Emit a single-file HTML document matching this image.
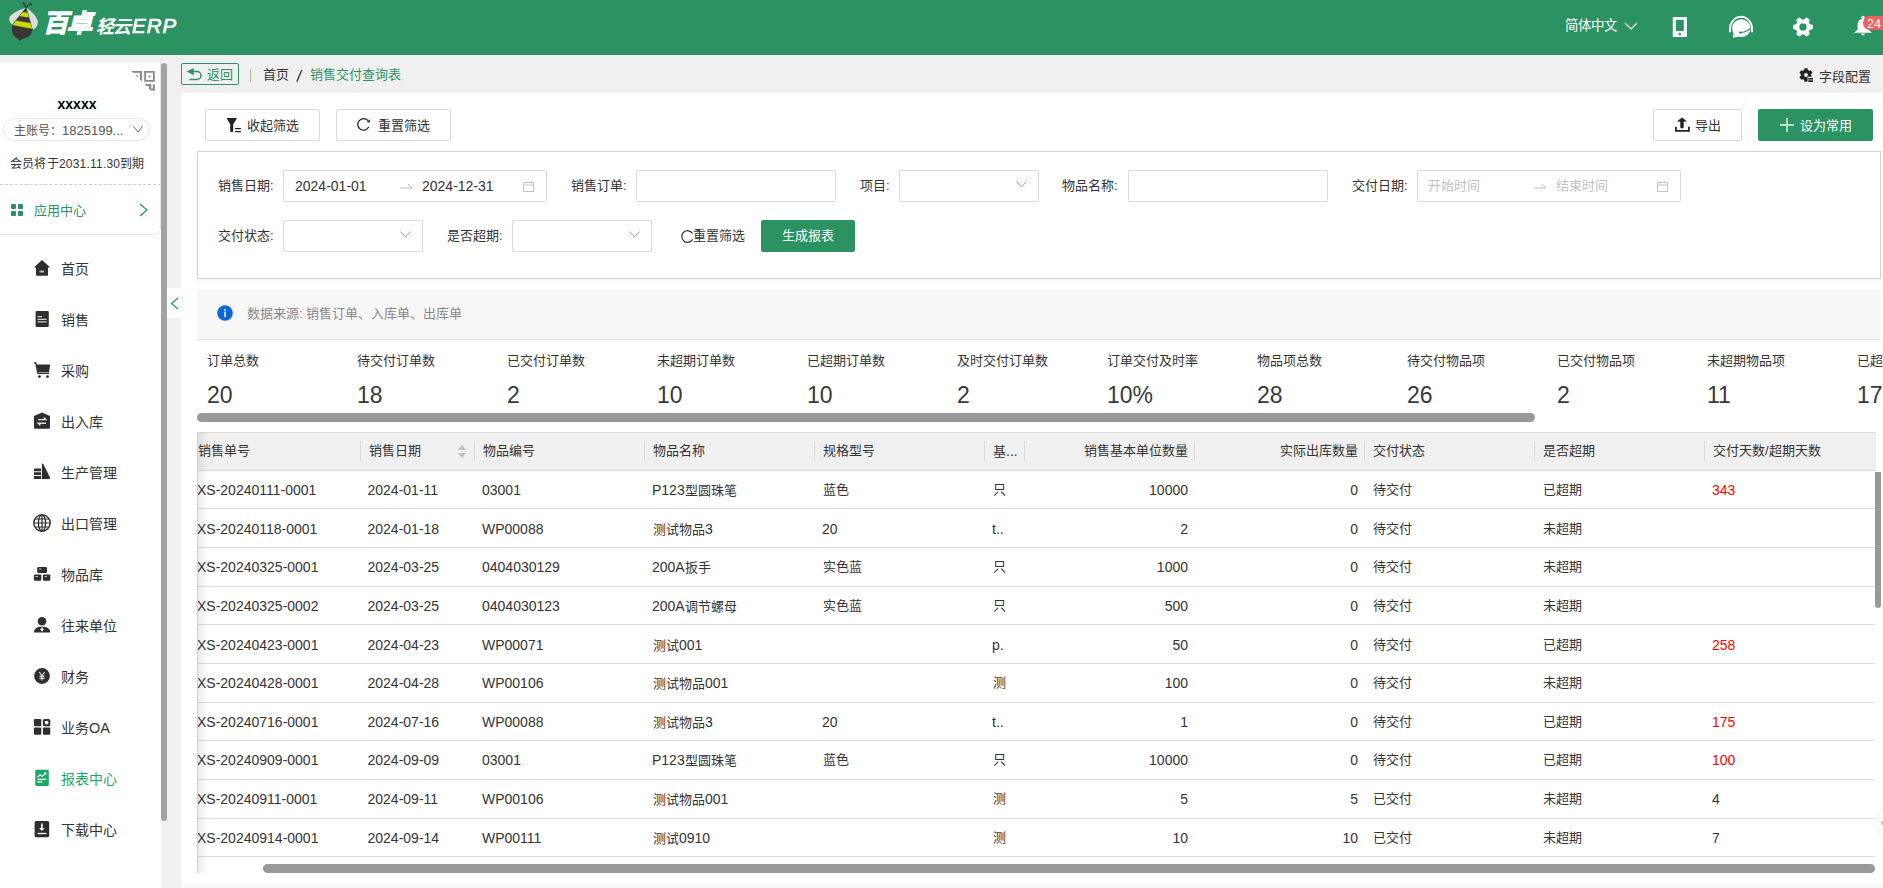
<!DOCTYPE html>
<html lang="zh-CN">
<head>
<meta charset="utf-8">
<style>
*{margin:0;padding:0;box-sizing:border-box}
html,body{width:1883px;height:888px;overflow:hidden;background:#f0f0f0;font-family:"Liberation Sans",sans-serif;color:#333;font-size:13px}
.a{position:absolute;white-space:nowrap}
#hdr{position:absolute;left:0;top:0;width:1883px;height:55px;background:#2b9362}
#side{position:absolute;left:0;top:63px;width:161px;height:825px;background:#fff}
#sbar{position:absolute;left:161px;top:63px;width:6px;height:758px;background:#a3a3a3;border-radius:3px}
#main{position:absolute;left:181px;top:93px;width:1702px;height:795px;background:#fff}
.menu{position:absolute;left:0;width:161px;height:20px}
.menu .ic{position:absolute;left:34px;top:2px;width:16px;height:16px}
.menu .t{position:absolute;left:61px;top:0;font-size:14px;line-height:20px;color:#333}

.btn{position:absolute;height:32px;border:1px solid #d9d9d9;background:#fff;border-radius:2px}
.inp{position:absolute;height:32px;border:1px solid #d9d9d9;background:#fff;border-radius:2px}
.n{font-size:1.077em}
.lbl{position:absolute;font-size:13px;line-height:18px;color:#333;white-space:nowrap}
</style>
</head>
<body>
<div id="hdr">
  <!-- bee logo -->
  <svg class="a" style="left:0;top:0" width="42" height="45" viewBox="0 0 42 45">
    <defs><clipPath id="bc"><path d="M26 7.8 L32.4 29.3 Q32 36.5 24.5 38.3 Q21.5 38.8 19.5 41 Q18 38.5 15.5 37.2 Q11.3 34.5 12 26 Z"/></clipPath></defs>
    <path d="M25.3 8 Q14 11.5 9.8 16.5 Q8 21.5 12.2 24.6 Z" fill="#dcdcdc"/>
    <path d="M26.8 8 Q35.5 14 37.7 20.5 Q38.5 27.5 32.8 29.4 Z" fill="#dcdcdc"/>
    <path d="M26 7.8 L32.4 29.3 Q32 36.5 24.5 38.3 Q21.5 38.8 19.5 41 Q18 38.5 15.5 37.2 Q11.3 34.5 12 26 Z" fill="#3c3536"/>
    <g clip-path="url(#bc)"><path d="M10 11.5 L40 13 L40 19 L10 14.8 Z" fill="#c8d800"/><path d="M5 18.8 L40 24.8 L40 30.5 L5 23.6 Z" fill="#c8d800"/></g>
    <path d="M26 7.8 Q25.5 5 23.5 3.2 M26.3 7.8 Q27.5 5 30.8 4.2" stroke="#3c3536" stroke-width="1.3" fill="none"/>
    <circle cx="23.6" cy="3.2" r="1.1" fill="#3c3536"/><circle cx="30.8" cy="4.2" r="1.1" fill="#3c3536"/>
  </svg>
  <div class="a" style="left:43px;top:6px;font-size:25px;font-weight:bold;font-style:italic;color:#fff;line-height:34px;letter-spacing:-1.5px;-webkit-text-stroke:1.2px #fff">百卓</div>
  <div class="a" style="left:96px;top:15px;font-size:18px;font-weight:bold;font-style:italic;color:#fff;line-height:24px;letter-spacing:-1px">轻云</div>
  <div class="a" style="left:132px;top:13px;font-size:20.5px;font-style:italic;color:#fff;line-height:26px;letter-spacing:1px;-webkit-text-stroke:0.7px #fff">ERP</div>

  <div class="a" style="left:1565px;top:17px;font-size:13.5px;color:#fff;line-height:18px">简体中文</div>
  <svg class="a" style="left:1624px;top:21px" width="14" height="10" viewBox="0 0 14 10"><path d="M1 2 L7 8 L13 2" stroke="#fff" stroke-width="1.1" fill="none"/></svg>

  <svg class="a" style="left:1672px;top:16px" width="16" height="22" viewBox="0 0 16 22"><path fill-rule="evenodd" d="M1.4 0.9 H14.3 Q14.9 0.9 14.9 1.5 V20.4 Q14.9 21 14.3 21 H1.4 Q0.8 21 0.8 20.4 V1.5 Q0.8 0.9 1.4 0.9 Z M4.3 4.1 Q3.9 4.1 3.9 4.5 V14.5 Q3.9 14.9 4.3 14.9 H11.4 Q11.8 14.9 11.8 14.5 V4.5 Q11.8 4.1 11.4 4.1 Z" fill="#fff"/><circle cx="7.8" cy="18.1" r="1.3" fill="#2b9362"/></svg>
  <svg class="a" style="left:1728px;top:15px" width="26" height="24" viewBox="0 0 26 24"><path d="M2 17.2 V13.8 A11 12 0 0 1 24 13.8 V17.2" stroke="#fff" stroke-width="2" fill="none"/><ellipse cx="13.3" cy="13.2" rx="9.2" ry="8.9" fill="#fff"/><path d="M5.6 17 L5 23 L10.5 21.4 Z" fill="#fff"/><path d="M12 17.6 Q18 17.6 22.3 13.4" stroke="#2b9362" stroke-width="1.3" fill="none"/><ellipse cx="12.4" cy="17.6" rx="1.7" ry="1.1" fill="#2b9362"/></svg>
  <svg class="a" style="left:1792px;top:16px" width="22" height="22" viewBox="0 0 22 22"><path fill-rule="evenodd" d="M12.06 4.08 L14.26 1.97 L17.19 3.66 L16.46 6.62 L17.52 8.46 L20.45 9.31 L20.45 12.69 L17.52 13.54 L16.46 15.38 L17.19 18.34 L14.26 20.03 L12.06 17.92 L9.94 17.92 L7.74 20.03 L4.81 18.34 L5.54 15.38 L4.48 13.54 L1.55 12.69 L1.55 9.31 L4.48 8.46 L5.54 6.62 L4.81 3.66 L7.74 1.97 L9.94 4.08 Z M11 6.9 A4.1 4.1 0 1 0 11 15.1 A4.1 4.1 0 1 0 11 6.9 Z" fill="#fff" stroke="#fff" stroke-width="1" stroke-linejoin="round"/></svg>
  <svg class="a" style="left:1853px;top:15px" width="20" height="22" viewBox="0 0 20 22"><circle cx="10" cy="2.4" r="1.7" fill="#fff"/><path d="M10 3.6 Q15.4 4.2 15.4 10.5 V14.8 L19 17.8 H1 L4.6 14.8 V10.5 Q4.6 4.2 10 3.6 Z" fill="#fff"/><path d="M7.6 18.6 Q10 22.2 12.4 18.6 Z" fill="#fff"/></svg>
  <div class="a" style="left:1863px;top:16px;width:27px;height:14px;background:#f45e5e;border-radius:7px"></div>
  <div class="a" style="left:1867px;top:17px;font-size:12.5px;line-height:14px;color:#fff">24</div>
</div>

<div id="side">
  <svg class="a" style="left:126px;top:3px" width="34" height="32" viewBox="0 0 34 32">
    <defs><clipPath id="qc"><polygon points="4.2,4 34,4 34,34 33.5,33.2"/></clipPath></defs>
    <g clip-path="url(#qc)" fill="#8a8a8a">
      <rect x="5" y="5" width="10.9" height="1.8"/><rect x="13.9" y="5" width="2" height="10.7"/><circle cx="10.4" cy="10.4" r="1.3"/>
      <path fill-rule="evenodd" d="M18.2 5 H28.8 V15.7 H18.2 Z M20 6.8 V13.9 H27 V6.8 Z"/><circle cx="23.5" cy="10.5" r="1.1"/>
      <rect x="26.8" y="18.2" width="2" height="6.3"/><rect x="23" y="22.6" width="5.8" height="1.9"/><rect x="18.2" y="18.2" width="7" height="2"/><rect x="23" y="18.2" width="2.2" height="6.3"/>
      <circle cx="28" cy="28.5" r="1"/>
    </g>
  </svg>
  <div class="a" style="left:0;width:154px;text-align:center;top:33px;font-size:14px;font-weight:bold;color:#000;line-height:16px">xxxxx</div>
  <div class="a" style="left:3px;top:55px;width:147px;height:23px;border:1px solid #e6e6e6;border-radius:12px"></div>
  <div class="a" style="left:14px;top:59px;font-size:12px;color:#555;line-height:17px">主账号：<span style="font-size:13px">1825199...</span></div>
  <svg class="a" style="left:133px;top:63px" width="10" height="7" viewBox="0 0 10 7"><path d="M0.5 0.5 L5 6 L9.5 0.5" stroke="#666" stroke-width="1" fill="none"/></svg>
  <div class="a" style="left:10px;top:93px;font-size:12px;color:#333;line-height:17px;letter-spacing:0.22px">会员将于2031.11.30到期</div>
  <div class="a" style="left:0;top:121px;width:161px;border-top:1px dashed #ccc"></div>
  <div class="a" style="left:-2px;top:-5px;width:163px;height:177px;border-right:1px solid #e6e6e6;border-bottom:1px solid #e6e6e6;border-bottom-right-radius:7px"></div>
  <svg class="a" style="left:11px;top:141px" width="12" height="12" viewBox="0 0 12 12"><rect x="0" y="0" width="5" height="5" rx="1" fill="#2b9362"/><rect x="7" y="0" width="5" height="5" rx="1" fill="#2b9362"/><rect x="0" y="7" width="5" height="5" rx="1" fill="#2b9362"/><rect x="7" y="7" width="5" height="5" rx="1" fill="#2b9362"/></svg>
  <div class="a" style="left:34px;top:139px;font-size:13px;color:#2b9362;line-height:17px">应用中心</div>
  <svg class="a" style="left:139px;top:140px" width="9" height="14" viewBox="0 0 9 14"><path d="M1 1 L8 7 L1 13" stroke="#2b9362" stroke-width="1.4" fill="none"/></svg>
  <svg class="a" style="left:33px;top:196px" width="18" height="18" viewBox="0 0 18 18"><path d="M9 1 L17.3 8.6 H15 V15.8 Q15 16.8 14 16.8 H4 Q3 16.8 3 15.8 V8.6 H0.8 Z" fill="#2e2e2e"/><rect x="6.5" y="11.6" width="4.5" height="1.9" fill="#bbb"/></svg><div class="a" style="left:61px;top:195.8px;font-size:14px;line-height:20px;color:#333">首页</div>
  <svg class="a" style="left:33px;top:247px" width="18" height="18" viewBox="0 0 18 18"><rect x="2.6" y="0.9" width="13.2" height="16.1" rx="1.2" fill="#2e2e2e"/><path d="M4.6 6.6 H9 M4.6 9.3 H13.6 M4.6 11.9 H13.6" stroke="#d0d0d0" stroke-width="1.3"/></svg><div class="a" style="left:61px;top:246.8px;font-size:14px;line-height:20px;color:#333">销售</div>
  <svg class="a" style="left:33px;top:298px" width="18" height="18" viewBox="0 0 18 18"><path d="M1 1.8 H2.8 L4.8 12.4 H16" stroke="#2e2e2e" stroke-width="1.3" fill="none"/><path d="M3.4 3.6 H17.2 L16 11.3 H4.9 Z" fill="#2e2e2e"/><circle cx="6.5" cy="15.6" r="1.4" fill="#2e2e2e"/><circle cx="14.5" cy="15.6" r="1.4" fill="#2e2e2e"/></svg><div class="a" style="left:61px;top:297.8px;font-size:14px;line-height:20px;color:#333">采购</div>
  <svg class="a" style="left:33px;top:349px" width="18" height="18" viewBox="0 0 18 18"><path d="M9 0.6 L17 4 V15.7 Q17 16.7 16 16.7 H2 Q1 16.7 1 15.7 V4 Z" fill="#2e2e2e"/><path d="M5 7.6 H12.8 L10.6 5.6 M13 11.2 H5.2 L7.4 13.2" stroke="rgba(255,255,255,0.85)" stroke-width="1.4" fill="none"/></svg><div class="a" style="left:61px;top:348.8px;font-size:14px;line-height:20px;color:#333">出入库</div>
  <svg class="a" style="left:33px;top:400px" width="18" height="18" viewBox="0 0 18 18"><path d="M9.6 0.6 Q10.2 0.6 10.6 1.4 L17 14.6 Q17.4 16 16 16 H8.9 V1.6 Q9 0.6 9.6 0.6 Z" fill="#2e2e2e"/><path d="M1.8 5.5 H8 V8.3 H0.9 V6.4 Q0.9 5.5 1.8 5.5 Z M0.9 9.3 H8 V12.1 H0.9 Z M0.9 13.1 H8 V16 H1.8 Q0.9 16 0.9 15.1 Z" fill="#2e2e2e"/></svg><div class="a" style="left:61px;top:399.8px;font-size:14px;line-height:20px;color:#333">生产管理</div>
  <svg class="a" style="left:33px;top:451px" width="18" height="18" viewBox="0 0 18 18"><circle cx="9" cy="9" r="8.2" stroke="#2e2e2e" stroke-width="1.4" fill="none"/><ellipse cx="9" cy="9" rx="3.6" ry="8.2" stroke="#2e2e2e" stroke-width="1.3" fill="none"/><path d="M1 9 H17 M2 5 H16 M2 13 H16 M9 1 V17" stroke="#2e2e2e" stroke-width="1.2"/></svg><div class="a" style="left:61px;top:450.8px;font-size:14px;line-height:20px;color:#333">出口管理</div>
  <svg class="a" style="left:33px;top:502px" width="18" height="18" viewBox="0 0 18 18"><rect x="4.2" y="2" width="9.8" height="6" rx="1.2" fill="#2e2e2e"/><rect x="0.9" y="9.4" width="7.4" height="6.4" rx="1.2" fill="#2e2e2e"/><rect x="9.9" y="9.4" width="7.4" height="6.4" rx="1.2" fill="#2e2e2e"/><path d="M6 4 H8.2 M2.6 11.5 H4.8 M11.6 11.5 H13.8" stroke="#ccc" stroke-width="1"/></svg><div class="a" style="left:61px;top:501.8px;font-size:14px;line-height:20px;color:#333">物品库</div>
  <svg class="a" style="left:33px;top:553px" width="18" height="18" viewBox="0 0 18 18"><circle cx="9" cy="5.3" r="4.3" fill="#2e2e2e"/><path d="M0.9 16.5 Q0.9 10.6 9 10.4 Q17.3 10.6 17.3 16.5 Z" fill="#2e2e2e"/><path d="M9 10.6 V14 M7.6 13 L9 15.2 L10.4 13 Z" stroke="rgba(255,255,255,0.85)" stroke-width="1" fill="rgba(255,255,255,0.85)"/></svg><div class="a" style="left:61px;top:552.8px;font-size:14px;line-height:20px;color:#333">往来单位</div>
  <svg class="a" style="left:33px;top:604px" width="18" height="18" viewBox="0 0 18 18"><circle cx="9" cy="9" r="7.9" fill="#2e2e2e"/><path d="M6.3 5 L9 8.8 L11.7 5 M9 8.8 V13.4 M6.5 9.4 H11.5 M6.5 11.4 H11.5" stroke="rgba(255,255,255,0.85)" stroke-width="1.1" fill="none"/></svg><div class="a" style="left:61px;top:603.8px;font-size:14px;line-height:20px;color:#333">财务</div>
  <svg class="a" style="left:33px;top:655px" width="18" height="18" viewBox="0 0 18 18"><rect x="0.9" y="1" width="7.4" height="7.3" rx="1.2" fill="#2e2e2e"/><rect x="10.9" y="2" width="5.4" height="5.3" rx="0.6" stroke="#2e2e2e" stroke-width="2" fill="none"/><rect x="0.9" y="9.4" width="7.4" height="7.3" rx="1.2" fill="#2e2e2e"/><rect x="9.9" y="9.4" width="7.4" height="7.3" rx="1.2" fill="#2e2e2e"/></svg><div class="a" style="left:61px;top:654.8px;font-size:14px;line-height:20px;color:#333">业务<span style="font-size:14.5px">OA</span></div>
  <svg class="a" style="left:33px;top:706px" width="18" height="18" viewBox="0 0 18 18"><rect x="2.3" y="0.8" width="13.5" height="16.2" rx="1.2" fill="#1aa862"/><path d="M4.5 8.2 L7.2 5.8 L9.2 7.2 L12.6 4" stroke="#fff" stroke-width="1.3" fill="none"/><path d="M10.6 3.4 H13.4 V6.2 Z" fill="#fff"/><path d="M4.5 10.4 H13.4 M4.5 12.9 H9.4" stroke="#fff" stroke-width="1.3"/></svg><div class="a" style="left:61px;top:705.8px;font-size:14px;line-height:20px;color:#1aa862">报表中心</div>
  <svg class="a" style="left:33px;top:757px" width="18" height="18" viewBox="0 0 18 18"><rect x="1.6" y="1" width="14.6" height="16.2" rx="1.6" fill="#2e2e2e"/><path d="M8.9 3.6 V9.6" stroke="#fff" stroke-width="1.6"/><path d="M6.1 8 L8.9 11 L11.7 8 Z" fill="#fff"/><path d="M4.6 13.5 H13.4" stroke="#fff" stroke-width="1.3"/></svg><div class="a" style="left:61px;top:756.8px;font-size:14px;line-height:20px;color:#333">下载中心</div>
</div>
<div id="sbar"></div>
<div id="main"></div>
<div class="a" style="left:167px;top:288px;width:14px;height:30px;background:#fff"></div>
<svg class="a" style="left:170px;top:297px" width="9" height="13" viewBox="0 0 9 13"><path d="M8 1 L1.5 6.5 L8 12" stroke="#2b9362" stroke-width="1.2" fill="none"/></svg>


<!-- breadcrumb bar -->
<div class="a" style="left:181px;top:63px;width:58px;height:22px;border:1px solid #2b9362;border-radius:2px"></div>
<svg class="a" style="left:186px;top:67px" width="16" height="14" viewBox="0 0 16 14"><path d="M6.5 4.6 H11 A3.95 3.95 0 0 1 11 12.5 H3.4" stroke="#2b9362" stroke-width="1.5" fill="none"/><path d="M0.6 4.6 L7.6 0.9 V8.3 Z" fill="#2b9362"/></svg>
<div class="a" style="left:207px;top:66px;font-size:13px;color:#2b9362;line-height:17px">返回</div>
<div class="a" style="left:250px;top:69px;width:1px;height:13px;background:#c9b68f"></div>
<div class="a" style="left:263px;top:66px;font-size:13px;color:#333;line-height:17px">首页</div>
<svg class="a" style="left:295px;top:69px" width="9" height="14" viewBox="0 0 9 14"><path d="M6.8 1 L1.8 12.8" stroke="#333" stroke-width="1.3"/></svg>
<div class="a" style="left:310px;top:66px;font-size:13px;color:#2b9362;line-height:17px">销售交付查询表</div>
<svg class="a" style="left:1798px;top:67px" width="16" height="16" viewBox="0 0 16 16"><defs><clipPath id="gc"><path d="M0 0 H16 V9.8 H9.6 V16 H0 Z"/></clipPath></defs><g clip-path="url(#gc)"><path fill-rule="evenodd" d="M6.15 3.36 L6.71 1.53 L9.29 1.53 L9.85 3.36 L11.09 4.07 L12.96 3.65 L14.25 5.88 L12.95 7.28 L12.95 8.72 L14.25 10.12 L12.96 12.35 L11.09 11.93 L9.85 12.64 L9.29 14.47 L6.71 14.47 L6.15 12.64 L4.91 11.93 L3.04 12.35 L1.75 10.12 L3.05 8.72 L3.05 7.28 L1.75 5.88 L3.04 3.65 L4.91 4.07 Z M8 5.8 A2.2 2.2 0 1 0 8 10.2 A2.2 2.2 0 1 0 8 5.8 Z" fill="#222" stroke="#222" stroke-width="0.5" stroke-linejoin="round"/></g><rect x="10.2" y="11" width="4.8" height="1.6" fill="#222"/><rect x="10.2" y="13.3" width="4.8" height="1.7" fill="#222"/></svg>
<div class="a" style="left:1819px;top:68px;font-size:13px;color:#333;line-height:17px">字段配置</div>

<!-- top buttons -->
<div class="btn" style="left:205px;top:109px;width:115px"></div>
<svg class="a" style="left:226px;top:117px" width="16" height="16" viewBox="0 0 16 16"><path d="M1.4 1 H10.4 Q11 1 10.7 1.8 L7.2 7.2 V14.2 Q5.7 16 4.2 14.2 V7.2 L0.9 1.8 Q0.7 1 1.4 1 Z" fill="#222"/><rect x="9" y="11" width="6" height="1.3" rx="0.6" fill="#222"/><rect x="9" y="14" width="6" height="1.3" rx="0.6" fill="#222"/></svg>
<div class="lbl" style="left:247px;top:117px">收起筛选</div>
<div class="btn" style="left:336px;top:109px;width:115px"></div>
<svg class="a" style="left:357px;top:118px" width="14" height="14" viewBox="0 0 14 14"><path d="M11.04 2.67 A5.8 5.8 0 1 0 11.86 8.85" stroke="#222" stroke-width="1.25" fill="none"/><path d="M12.9 1.2 L12.9 4.6 L9.5 4.3 Z" fill="#222"/></svg>
<div class="lbl" style="left:378px;top:117px">重置筛选</div>

<div class="btn" style="left:1653px;top:109px;width:89px"></div>
<svg class="a" style="left:1675px;top:116px" width="15" height="17" viewBox="0 0 15 17"><path d="M2.6 5.2 L7 1.8 L11.4 5.2 Z" fill="#222" stroke="#222" stroke-width="0.6" stroke-linejoin="round"/><path d="M5.3 4.5 H8.7 V11.6 Q7 13.4 5.3 11.6 Z" fill="#222"/><path d="M0.9 10.8 V14.9 H13.9 V10.8" stroke="#222" stroke-width="1.8" fill="none"/></svg>
<div class="lbl" style="left:1695px;top:117px">导出</div>
<div class="a" style="left:1758px;top:109px;width:115px;height:32px;background:#2b9362;border-radius:2px"></div>
<svg class="a" style="left:1780px;top:118px" width="15" height="15" viewBox="0 0 15 15"><path d="M7 0 V14 M0 7 H14" stroke="rgba(255,255,255,0.7)" stroke-width="1.8"/></svg>
<div class="lbl" style="left:1800px;top:117px;color:#fff">设为常用</div>

<!-- filter box -->
<div class="a" style="left:197px;top:151px;width:1684px;height:128px;border:1px solid #d3d3d3;background:#fff;box-shadow:0 3px 8px rgba(0,0,0,0.035)"></div>
<div class="lbl" style="left:218px;top:177px">销售日期:</div>
<div class="inp" style="left:283px;top:170px;width:264px"></div>
<div class="lbl" style="left:295px;top:177px"><span class="n">2024-01-01</span></div>
<svg class="a" style="left:400px;top:183px" width="13" height="6" viewBox="0 0 13 6"><path d="M0 5 H12 L8 1" stroke="#bbb" stroke-width="1" fill="none"/></svg>
<div class="lbl" style="left:422px;top:177px"><span class="n">2024-12-31</span></div>
<svg class="a" style="left:522px;top:180px" width="13" height="13" viewBox="0 0 13 13"><rect x="1.5" y="2.5" width="10" height="9" stroke="#c4c4c4" stroke-width="1" fill="none"/><path d="M1.5 5 H11.5 M4 1 V3 M9 1 V3" stroke="#c4c4c4" stroke-width="1"/></svg>

<div class="lbl" style="left:571px;top:177px">销售订单:</div>
<div class="inp" style="left:636px;top:170px;width:200px"></div>
<div class="lbl" style="left:860px;top:177px">项目:</div>
<div class="inp" style="left:899px;top:170px;width:140px"></div>
<svg class="a" style="left:1016px;top:181px" width="11" height="7" viewBox="0 0 11 7"><path d="M0.5 0.5 L5.5 6 L10.5 0.5" stroke="#999" stroke-width="1" fill="none"/></svg>
<div class="lbl" style="left:1062px;top:177px">物品名称:</div>
<div class="inp" style="left:1128px;top:170px;width:200px"></div>
<div class="lbl" style="left:1352px;top:177px">交付日期:</div>
<div class="inp" style="left:1417px;top:170px;width:264px"></div>
<div class="lbl" style="left:1428px;top:177px;color:#bfbfbf">开始时间</div>
<svg class="a" style="left:1534px;top:183px" width="13" height="6" viewBox="0 0 13 6"><path d="M0 5 H12 L8 1" stroke="#bbb" stroke-width="1" fill="none"/></svg>
<div class="lbl" style="left:1556px;top:177px;color:#bfbfbf">结束时间</div>
<svg class="a" style="left:1656px;top:180px" width="13" height="13" viewBox="0 0 13 13"><rect x="1.5" y="2.5" width="10" height="9" stroke="#c4c4c4" stroke-width="1" fill="none"/><path d="M1.5 5 H11.5 M4 1 V3 M9 1 V3" stroke="#c4c4c4" stroke-width="1"/></svg>

<div class="lbl" style="left:218px;top:227px">交付状态:</div>
<div class="inp" style="left:283px;top:220px;width:140px"></div>
<svg class="a" style="left:400px;top:231px" width="11" height="7" viewBox="0 0 11 7"><path d="M0.5 0.5 L5.5 6 L10.5 0.5" stroke="#999" stroke-width="1" fill="none"/></svg>
<div class="lbl" style="left:447px;top:227px">是否超期:</div>
<div class="inp" style="left:512px;top:220px;width:140px"></div>
<svg class="a" style="left:629px;top:231px" width="11" height="7" viewBox="0 0 11 7"><path d="M0.5 0.5 L5.5 6 L10.5 0.5" stroke="#999" stroke-width="1" fill="none"/></svg>
<svg class="a" style="left:681px;top:230px" width="13" height="13" viewBox="0 0 13 13"><path d="M11.6 3.6 A5.8 5.8 0 1 0 11.6 9.4" stroke="#333" stroke-width="1.2" fill="none"/></svg>
<div class="lbl" style="left:693px;top:227px">重置筛选</div>
<div class="a" style="left:761px;top:220px;width:94px;height:32px;background:#2b9362;border-radius:2px"></div>
<div class="lbl" style="left:782px;top:227px;color:#fff">生成报表</div>

<!-- info bar -->
<div class="a" style="left:197px;top:289px;width:1684px;height:51px;background:#f7f7f7;border-bottom:1px solid #dedede"></div>
<svg class="a" style="left:217px;top:305px" width="16" height="16" viewBox="0 0 16 16"><circle cx="8" cy="8" r="7.8" fill="#0c68d9"/><rect x="7.1" y="6.6" width="1.8" height="5.6" fill="rgba(255,255,255,0.8)"/><rect x="7.1" y="4" width="1.8" height="1.7" fill="rgba(255,255,255,0.8)"/></svg>
<div class="lbl" style="left:247px;top:305px;color:#888">数据来源: 销售订单、入库单、出库单</div>
<div class="lbl" style="left:207px;top:352px">订单总数</div><div class="a" style="left:207px;top:381px;font-size:23px;line-height:28px;color:#383838">20</div>
<div class="lbl" style="left:357px;top:352px">待交付订单数</div><div class="a" style="left:357px;top:381px;font-size:23px;line-height:28px;color:#383838">18</div>
<div class="lbl" style="left:507px;top:352px">已交付订单数</div><div class="a" style="left:507px;top:381px;font-size:23px;line-height:28px;color:#383838">2</div>
<div class="lbl" style="left:657px;top:352px">未超期订单数</div><div class="a" style="left:657px;top:381px;font-size:23px;line-height:28px;color:#383838">10</div>
<div class="lbl" style="left:807px;top:352px">已超期订单数</div><div class="a" style="left:807px;top:381px;font-size:23px;line-height:28px;color:#383838">10</div>
<div class="lbl" style="left:957px;top:352px">及时交付订单数</div><div class="a" style="left:957px;top:381px;font-size:23px;line-height:28px;color:#383838">2</div>
<div class="lbl" style="left:1107px;top:352px">订单交付及时率</div><div class="a" style="left:1107px;top:381px;font-size:23px;line-height:28px;color:#383838">10%</div>
<div class="lbl" style="left:1257px;top:352px">物品项总数</div><div class="a" style="left:1257px;top:381px;font-size:23px;line-height:28px;color:#383838">28</div>
<div class="lbl" style="left:1407px;top:352px">待交付物品项</div><div class="a" style="left:1407px;top:381px;font-size:23px;line-height:28px;color:#383838">26</div>
<div class="lbl" style="left:1557px;top:352px">已交付物品项</div><div class="a" style="left:1557px;top:381px;font-size:23px;line-height:28px;color:#383838">2</div>
<div class="lbl" style="left:1707px;top:352px">未超期物品项</div><div class="a" style="left:1707px;top:381px;font-size:23px;line-height:28px;color:#383838">11</div>
<div class="lbl" style="left:1857px;top:352px">已超期物品项</div><div class="a" style="left:1857px;top:381px;font-size:23px;line-height:28px;color:#383838">17</div>
<div class="a" style="left:197px;top:413px;width:1338px;height:9px;background:#999;border-radius:4.5px"></div>



<!-- table -->
<div id="tbl" class="a" style="left:197px;top:432px;width:1686px;height:441px;overflow:hidden;background:#fff">
<div class="a" style="left:0;top:0;width:1679px;height:39px;background:#f0f0f0;border-top:1px solid #dcdcdc;border-bottom:1px solid #dcdcdc"></div>
<div class="a" style="left:163px;top:9px;width:1px;height:20px;background:#d9d9d9"></div><div class="a" style="left:277px;top:9px;width:1px;height:20px;background:#d9d9d9"></div><div class="a" style="left:447px;top:9px;width:1px;height:20px;background:#d9d9d9"></div><div class="a" style="left:617px;top:9px;width:1px;height:20px;background:#d9d9d9"></div><div class="a" style="left:787px;top:9px;width:1px;height:20px;background:#d9d9d9"></div><div class="a" style="left:827px;top:9px;width:1px;height:20px;background:#d9d9d9"></div><div class="a" style="left:997px;top:9px;width:1px;height:20px;background:#d9d9d9"></div><div class="a" style="left:1167px;top:9px;width:1px;height:20px;background:#d9d9d9"></div><div class="a" style="left:1337px;top:9px;width:1px;height:20px;background:#d9d9d9"></div><div class="a" style="left:1507px;top:9px;width:1px;height:20px;background:#d9d9d9"></div>
<div class="lbl" style="left:1px;top:10px">销售单号</div><div class="lbl" style="left:171.5px;top:10px">销售日期</div><div class="lbl" style="left:286px;top:10px">物品编号</div><div class="lbl" style="left:456px;top:10px">物品名称</div><div class="lbl" style="left:626px;top:10px">规格型号</div><div class="lbl" style="left:796px;top:10px">基<span class="n">...</span></div><div class="lbl" style="right:695px;top:10px">销售基本单位数量</div><div class="lbl" style="right:525px;top:10px">实际出库数量</div><div class="lbl" style="left:1176px;top:10px">交付状态</div><div class="lbl" style="left:1346px;top:10px">是否超期</div><div class="lbl" style="left:1516px;top:10px">交付天数/超期天数</div>
<svg class="a" style="left:260px;top:12px" width="10" height="15" viewBox="0 0 10 15"><path d="M1 6 L5 1 L9 6 Z M1 9 L5 14 L9 9 Z" fill="#c0c0c0"/></svg>
<div class="a" style="left:0;top:76px;width:1678px;height:1px;background:#dcdcdc"></div><div class="a" style="left:0;top:115px;width:1678px;height:1px;background:#dcdcdc"></div><div class="a" style="left:0;top:154px;width:1678px;height:1px;background:#dcdcdc"></div><div class="a" style="left:0;top:192px;width:1678px;height:1px;background:#dcdcdc"></div><div class="a" style="left:0;top:231px;width:1678px;height:1px;background:#dcdcdc"></div><div class="a" style="left:0;top:270px;width:1678px;height:1px;background:#dcdcdc"></div><div class="a" style="left:0;top:308px;width:1678px;height:1px;background:#dcdcdc"></div><div class="a" style="left:0;top:347px;width:1678px;height:1px;background:#dcdcdc"></div><div class="a" style="left:0;top:386px;width:1678px;height:1px;background:#dcdcdc"></div><div class="a" style="left:0;top:424px;width:1678px;height:1px;background:#dcdcdc"></div>
<div class="lbl" style="left:0px;top:49.1px;color:#333"><span class="n">XS-20240111-0001</span></div><div class="lbl" style="left:170.5px;top:49.1px;color:#333"><span class="n">2024-01-11</span></div><div class="lbl" style="left:285px;top:49.1px;color:#333"><span class="n">03001</span></div><div class="lbl" style="left:455px;top:49.1px;color:#333"><span class="n">P123</span>型圆珠笔</div><div class="lbl" style="left:626px;top:49.1px;color:#333">蓝色</div><div class="lbl" style="left:796px;top:49.1px;color:#333">只</div><div class="lbl" style="right:695px;top:49.1px;color:#333"><span class="n">10000</span></div><div class="lbl" style="right:525px;top:49.1px;color:#333"><span class="n">0</span></div><div class="lbl" style="left:1176px;top:49.1px;color:#333">待交付</div><div class="lbl" style="left:1346px;top:49.1px;color:#333">已超期</div><div class="lbl" style="left:1515px;top:49.1px;color:#f00"><span class="n">343</span></div>
<div class="lbl" style="left:0px;top:87.7px;color:#333"><span class="n">XS-20240118-0001</span></div><div class="lbl" style="left:170.5px;top:87.7px;color:#333"><span class="n">2024-01-18</span></div><div class="lbl" style="left:285px;top:87.7px;color:#333"><span class="n">WP00088</span></div><div class="lbl" style="left:456px;top:87.7px;color:#333">测试物品<span class="n">3</span></div><div class="lbl" style="left:625px;top:87.7px;color:#333"><span class="n">20</span></div><div class="lbl" style="left:795px;top:87.7px;color:#333"><span class="n">t..</span></div><div class="lbl" style="right:695px;top:87.7px;color:#333"><span class="n">2</span></div><div class="lbl" style="right:525px;top:87.7px;color:#333"><span class="n">0</span></div><div class="lbl" style="left:1176px;top:87.7px;color:#333">待交付</div><div class="lbl" style="left:1346px;top:87.7px;color:#333">未超期</div>
<div class="lbl" style="left:0px;top:126.3px;color:#333"><span class="n">XS-20240325-0001</span></div><div class="lbl" style="left:170.5px;top:126.3px;color:#333"><span class="n">2024-03-25</span></div><div class="lbl" style="left:285px;top:126.3px;color:#333"><span class="n">0404030129</span></div><div class="lbl" style="left:455px;top:126.3px;color:#333"><span class="n">200A</span>扳手</div><div class="lbl" style="left:626px;top:126.3px;color:#333">实色蓝</div><div class="lbl" style="left:796px;top:126.3px;color:#333">只</div><div class="lbl" style="right:695px;top:126.3px;color:#333"><span class="n">1000</span></div><div class="lbl" style="right:525px;top:126.3px;color:#333"><span class="n">0</span></div><div class="lbl" style="left:1176px;top:126.3px;color:#333">待交付</div><div class="lbl" style="left:1346px;top:126.3px;color:#333">未超期</div>
<div class="lbl" style="left:0px;top:164.9px;color:#333"><span class="n">XS-20240325-0002</span></div><div class="lbl" style="left:170.5px;top:164.9px;color:#333"><span class="n">2024-03-25</span></div><div class="lbl" style="left:285px;top:164.9px;color:#333"><span class="n">0404030123</span></div><div class="lbl" style="left:455px;top:164.9px;color:#333"><span class="n">200A</span>调节螺母</div><div class="lbl" style="left:626px;top:164.9px;color:#333">实色蓝</div><div class="lbl" style="left:796px;top:164.9px;color:#333">只</div><div class="lbl" style="right:695px;top:164.9px;color:#333"><span class="n">500</span></div><div class="lbl" style="right:525px;top:164.9px;color:#333"><span class="n">0</span></div><div class="lbl" style="left:1176px;top:164.9px;color:#333">待交付</div><div class="lbl" style="left:1346px;top:164.9px;color:#333">未超期</div>
<div class="lbl" style="left:0px;top:203.5px;color:#333"><span class="n">XS-20240423-0001</span></div><div class="lbl" style="left:170.5px;top:203.5px;color:#333"><span class="n">2024-04-23</span></div><div class="lbl" style="left:285px;top:203.5px;color:#333"><span class="n">WP00071</span></div><div class="lbl" style="left:456px;top:203.5px;color:#333">测试<span class="n">001</span></div><div class="lbl" style="left:795px;top:203.5px;color:#333"><span class="n">p.</span></div><div class="lbl" style="right:695px;top:203.5px;color:#333"><span class="n">50</span></div><div class="lbl" style="right:525px;top:203.5px;color:#333"><span class="n">0</span></div><div class="lbl" style="left:1176px;top:203.5px;color:#333">待交付</div><div class="lbl" style="left:1346px;top:203.5px;color:#333">已超期</div><div class="lbl" style="left:1515px;top:203.5px;color:#f00"><span class="n">258</span></div>
<div class="lbl" style="left:0px;top:242.1px;color:#333"><span class="n">XS-20240428-0001</span></div><div class="lbl" style="left:170.5px;top:242.1px;color:#333"><span class="n">2024-04-28</span></div><div class="lbl" style="left:285px;top:242.1px;color:#333"><span class="n">WP00106</span></div><div class="lbl" style="left:456px;top:242.1px;color:#333">测试物品<span class="n">001</span></div><div class="lbl" style="left:796px;top:242.1px;color:#333">测</div><div class="lbl" style="right:695px;top:242.1px;color:#333"><span class="n">100</span></div><div class="lbl" style="right:525px;top:242.1px;color:#333"><span class="n">0</span></div><div class="lbl" style="left:1176px;top:242.1px;color:#333">待交付</div><div class="lbl" style="left:1346px;top:242.1px;color:#333">未超期</div>
<div class="lbl" style="left:0px;top:280.7px;color:#333"><span class="n">XS-20240716-0001</span></div><div class="lbl" style="left:170.5px;top:280.7px;color:#333"><span class="n">2024-07-16</span></div><div class="lbl" style="left:285px;top:280.7px;color:#333"><span class="n">WP00088</span></div><div class="lbl" style="left:456px;top:280.7px;color:#333">测试物品<span class="n">3</span></div><div class="lbl" style="left:625px;top:280.7px;color:#333"><span class="n">20</span></div><div class="lbl" style="left:795px;top:280.7px;color:#333"><span class="n">t..</span></div><div class="lbl" style="right:695px;top:280.7px;color:#333"><span class="n">1</span></div><div class="lbl" style="right:525px;top:280.7px;color:#333"><span class="n">0</span></div><div class="lbl" style="left:1176px;top:280.7px;color:#333">待交付</div><div class="lbl" style="left:1346px;top:280.7px;color:#333">已超期</div><div class="lbl" style="left:1515px;top:280.7px;color:#f00"><span class="n">175</span></div>
<div class="lbl" style="left:0px;top:319.3px;color:#333"><span class="n">XS-20240909-0001</span></div><div class="lbl" style="left:170.5px;top:319.3px;color:#333"><span class="n">2024-09-09</span></div><div class="lbl" style="left:285px;top:319.3px;color:#333"><span class="n">03001</span></div><div class="lbl" style="left:455px;top:319.3px;color:#333"><span class="n">P123</span>型圆珠笔</div><div class="lbl" style="left:626px;top:319.3px;color:#333">蓝色</div><div class="lbl" style="left:796px;top:319.3px;color:#333">只</div><div class="lbl" style="right:695px;top:319.3px;color:#333"><span class="n">10000</span></div><div class="lbl" style="right:525px;top:319.3px;color:#333"><span class="n">0</span></div><div class="lbl" style="left:1176px;top:319.3px;color:#333">待交付</div><div class="lbl" style="left:1346px;top:319.3px;color:#333">已超期</div><div class="lbl" style="left:1515px;top:319.3px;color:#f00"><span class="n">100</span></div>
<div class="lbl" style="left:0px;top:357.9px;color:#333"><span class="n">XS-20240911-0001</span></div><div class="lbl" style="left:170.5px;top:357.9px;color:#333"><span class="n">2024-09-11</span></div><div class="lbl" style="left:285px;top:357.9px;color:#333"><span class="n">WP00106</span></div><div class="lbl" style="left:456px;top:357.9px;color:#333">测试物品<span class="n">001</span></div><div class="lbl" style="left:796px;top:357.9px;color:#333">测</div><div class="lbl" style="right:695px;top:357.9px;color:#333"><span class="n">5</span></div><div class="lbl" style="right:525px;top:357.9px;color:#333"><span class="n">5</span></div><div class="lbl" style="left:1176px;top:357.9px;color:#333">已交付</div><div class="lbl" style="left:1346px;top:357.9px;color:#333">未超期</div><div class="lbl" style="left:1515px;top:357.9px;color:#333"><span class="n">4</span></div>
<div class="lbl" style="left:0px;top:396.5px;color:#333"><span class="n">XS-20240914-0001</span></div><div class="lbl" style="left:170.5px;top:396.5px;color:#333"><span class="n">2024-09-14</span></div><div class="lbl" style="left:285px;top:396.5px;color:#333"><span class="n">WP00111</span></div><div class="lbl" style="left:456px;top:396.5px;color:#333">测试<span class="n">0910</span></div><div class="lbl" style="left:796px;top:396.5px;color:#333">测</div><div class="lbl" style="right:695px;top:396.5px;color:#333"><span class="n">10</span></div><div class="lbl" style="right:525px;top:396.5px;color:#333"><span class="n">10</span></div><div class="lbl" style="left:1176px;top:396.5px;color:#333">已交付</div><div class="lbl" style="left:1346px;top:396.5px;color:#333">未超期</div><div class="lbl" style="left:1515px;top:396.5px;color:#333"><span class="n">7</span></div>
<div class="a" style="left:0;top:0;width:1px;height:441px;background:#d0d0d0"></div>
<div class="a" style="left:1px;top:0;width:11px;height:441px;background:linear-gradient(to right,rgba(0,0,0,0.08),rgba(0,0,0,0))"></div>
<div class="a" style="left:66px;top:432px;width:1612px;height:9px;background:#999;border-radius:4.5px"></div>
<div class="a" style="left:1678px;top:40px;width:6px;height:136px;background:#999;border-radius:0 0 3px 3px"></div>
</div>
<div class="a" style="left:181px;top:881px;width:1702px;height:7px;background:linear-gradient(to bottom,rgba(0,0,0,0),rgba(0,0,0,0.035))"></div><div class="a" style="left:1878px;top:802px;width:42px;height:42px;border-radius:50%;background:#fff;box-shadow:0 0 6px rgba(0,0,0,0.07)"></div><div class="a" style="left:1881px;top:821px;width:3px;height:4px;background:#f5c27a;border-radius:1px"></div>
</body>
</html>
